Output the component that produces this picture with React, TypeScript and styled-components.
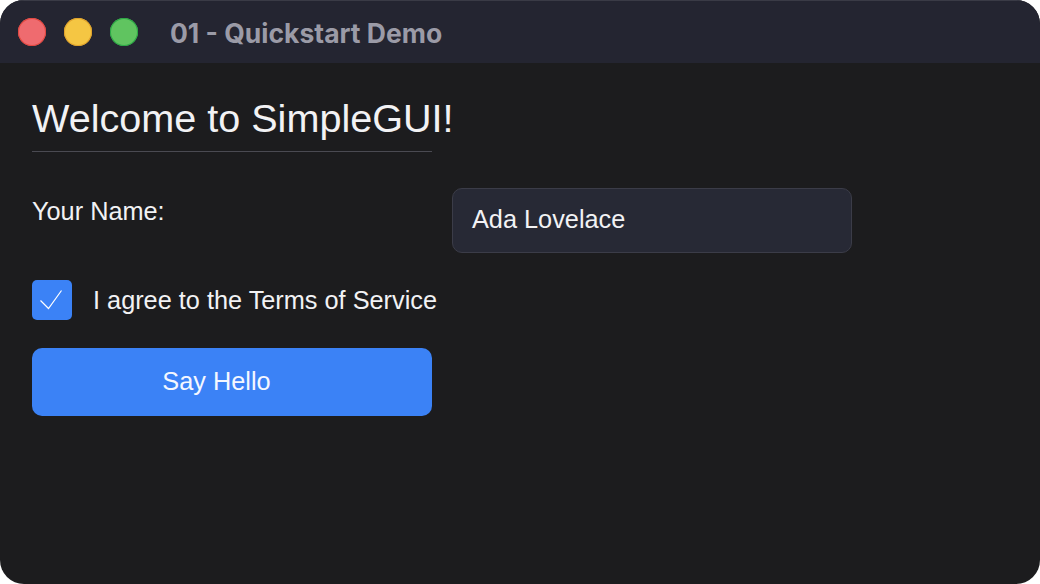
import React from "react";
import styled, { createGlobalStyle } from "styled-components";

const Global = createGlobalStyle`
  html, body { margin: 0; padding: 0; background: #ffffff; }
  body { font-family: "Liberation Sans", Arial, sans-serif; }
  * { box-sizing: border-box; }
`;

const Window = styled.div`
  width: 1040px;
  height: 584px;
  border-radius: 24px;
  overflow: hidden;
  background: #1c1c1e;
  display: flex;
  flex-direction: column;
`;

const TitleBar = styled.div`
  height: 63px;
  flex: none;
  background: #242531;
  border-top: 1px solid #3a3b46;
  display: flex;
  align-items: center;
  padding-left: 18px;
  gap: 18px;
`;

const Light = styled.span<{ $fill: string; $ring: string }>`
  width: 28px;
  height: 28px;
  border-radius: 50%;
  background: ${(p) => p.$fill};
  box-shadow: inset 0 0 0 1px ${(p) => p.$ring};
  flex: none;
`;

const Title = styled.div`
  margin-left: 14px;
  font-family: "Inter", "Liberation Sans", sans-serif;
  font-weight: 700;
  font-size: 26.5px;
  color: #9b9ba7;
  margin-top: 2px;
`;

const Content = styled.div`
  padding: 31px 32px 0 32px;
  display: flex;
  flex-direction: column;
  color: #f2f2f4;
`;

const Heading = styled.h1`
  margin: 0;
  font-weight: 400;
  font-size: 39.6px;
  line-height: 46px;
  width: 400px;
  white-space: nowrap;
  padding-top: 1px;
  padding-bottom: 10px;
  border-bottom: 1px solid #4a4a52;
`;

const FormGrid = styled.div`
  margin-top: 36px;
  display: grid;
  grid-template-columns: 400px 400px;
  column-gap: 20px;
  align-items: start;
`;

const Label = styled.div`
  font-size: 25.3px;
  line-height: 30px;
  padding-top: 8px;
`;

const Input = styled.div`
  height: 65px;
  border-radius: 10px;
  background: #272935;
  border: 1px solid #3b3c48;
  font-size: 25.3px;
  display: flex;
  align-items: center;
  padding-left: 19px;
  padding-bottom: 2px;
`;

const CheckRow = styled.label`
  margin-top: 27px;
  display: flex;
  align-items: center;
  gap: 21px;
  font-size: 25.3px;
  height: 40px;
`;

const Box = styled.span`
  width: 40px;
  height: 40px;
  border-radius: 5px;
  background: #3b82f6;
  display: flex;
  align-items: center;
  justify-content: center;
  flex: none;
`;

const Button = styled.button`
  margin-top: 28px;
  width: 400px;
  height: 68px;
  border: none;
  border-radius: 10px;
  background: #3b82f6;
  color: #f4f7ff;
  font-family: "Liberation Sans", Arial, sans-serif;
  font-size: 25.3px;
  padding: 0 31px 1px 0;
`;

export default function App() {
  return (
    <>
      <Global />
      <Window>
        <TitleBar>
          <Light $fill="#ef6b6f" $ring="#e2473f" />
          <Light $fill="#f5c643" $ring="#dfa12b" />
          <Light $fill="#60c460" $ring="#2aa845" />
          <Title>01 - Quickstart Demo</Title>
        </TitleBar>
        <Content>
          <Heading>Welcome to SimpleGUI!</Heading>
          <FormGrid>
            <Label>Your Name:</Label>
            <Input>Ada Lovelace</Input>
          </FormGrid>
          <CheckRow>
            <Box>
              <svg width="40" height="40" viewBox="0 0 40 40">
                <polyline
                  points="8.5,20.5 16.5,28.5 29.5,10.5"
                  fill="none"
                  stroke="#ffffff"
                  strokeWidth="1.2"
                />
              </svg>
            </Box>
            I agree to the Terms of Service
          </CheckRow>
          <Button>Say Hello</Button>
        </Content>
      </Window>
    </>
  );
}
